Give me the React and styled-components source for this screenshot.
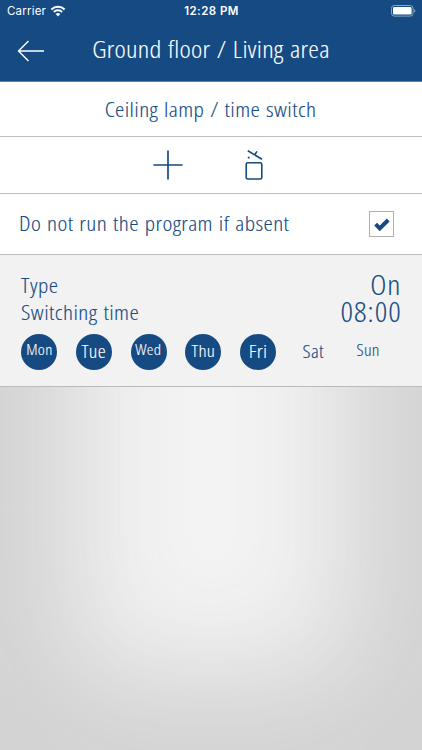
import React, { useState } from "react";
import styled, { createGlobalStyle } from "styled-components";

const DAYS = [
    { name: "Mon", size: 14.5, lift: 2.5, active: true },
    { name: "Tue", size: 17.5, lift: 1, active: true },
    { name: "Wed", size: 14.5, lift: 2.5, active: true },
    { name: "Thu", size: 16.5, lift: 2, active: true },
    { name: "Fri", size: 18.5, lift: 1.5, active: true },
    { name: "Sat", size: 17.5, lift: 1, active: false },
    { name: "Sun", size: 15.5, lift: 2, active: false },
];

const App = () => {
    const [skipAbsent, setSkipAbsent] = useState(true);
    const [days, setDays] = useState(DAYS);

    const toggleDay = (name) =>
        setDays(
            days.map((day) =>
                day.name === name ? { ...day, active: !day.active } : day
            )
        );

    return (
        <Screen>
            <GlobalStyle />
            <Header>
                <StatusBar>
                    <Carrier>
                        Carrier
                        <WifiIcon />
                    </Carrier>
                    <Clock>12:28 PM</Clock>
                    <BatteryIcon />
                </StatusBar>
                <NavBar>
                    <IconButton aria-label="Back">
                        <BackIcon />
                    </IconButton>
                    <Title>Ground floor / Living area</Title>
                </NavBar>
            </Header>
            <TitleRow>
                <Subtitle>Ceiling lamp / time switch</Subtitle>
            </TitleRow>
            <Toolbar>
                <IconButton aria-label="Add">
                    <PlusIcon />
                </IconButton>
                <IconButton aria-label="Delete">
                    <TrashIcon />
                </IconButton>
            </Toolbar>
            <OptionRow>
                <OptionLabel>Do not run the program if absent</OptionLabel>
                <Checkbox
                    role="checkbox"
                    aria-label="Absent"
                    aria-checked={skipAbsent}
                    onClick={() => setSkipAbsent(!skipAbsent)}
                >
                    {skipAbsent && <CheckIcon />}
                </Checkbox>
            </OptionRow>
            <Program>
                <Detail>
                    <DetailLabel>Type</DetailLabel>
                    <DetailValue>On</DetailValue>
                </Detail>
                <Detail>
                    <DetailLabel>Switching time</DetailLabel>
                    <DetailValue>08:00</DetailValue>
                </Detail>
                <Days>
                    {days.map((day) => (
                        <Day
                            key={day.name}
                            $active={day.active}
                            onClick={() => toggleDay(day.name)}
                        >
                            <DayName $size={day.size} $lift={day.lift}>
                                {day.name}
                            </DayName>
                        </Day>
                    ))}
                </Days>
            </Program>
        </Screen>
    );
};

const WifiIcon = () => (
    <svg width="16" height="12" viewBox="0 0 15 12" fill="none" stroke="#fff">
        <path d="M0.9 4.4a9.4 9.4 0 0 1 13.2 0" strokeWidth="2.1" />
        <path d="M3.4 7a5.8 5.8 0 0 1 8.2 0" strokeWidth="2" />
        <path d="M7.5 11.4L5.2 9a3.3 3.3 0 0 1 4.6 0z" fill="#fff" stroke="none" />
    </svg>
);

const BatteryIcon = () => (
    <svg width="25" height="12" viewBox="0 0 25 12" fill="none">
        <rect x="0.5" y="0.5" width="21.6" height="10.6" rx="2.8" stroke="#8ba5c2" />
        <rect x="2" y="2" width="18.6" height="7.6" rx="1.4" fill="#fff" />
        <path d="M23.2 4v3.8c1.5-.6 1.5-3.2 0-3.8z" fill="#8ba5c2" />
    </svg>
);

const BackIcon = () => (
    <svg width="28" height="22" viewBox="0 0 28 22" fill="none" stroke="#fff" strokeWidth="1.4">
        <path d="M11.5 1L1.5 11l10 10M1.5 11H27" />
    </svg>
);

const PlusIcon = () => (
    <svg width="30" height="30" viewBox="0 0 30 30" stroke="#164a82" strokeWidth="1.7">
        <path d="M15 0.4v29.2M0.4 15h29.2" />
    </svg>
);

const TrashIcon = () => (
    <svg width="18" height="30" viewBox="0 0 18 30" fill="none" stroke="#164a82" strokeWidth="1.6">
        <rect x="1.2" y="12.8" width="15.6" height="16.2" rx="1.6" />
        <path d="M2.8 0.8L17 9.2M9.4 5.2L12 1.4" />
        <path d="M2.8 7.6h1.8" strokeWidth="1.8" />
    </svg>
);

const CheckIcon = () => (
    <svg width="16" height="13" viewBox="0 0 16 13" fill="none" stroke="#164a82" strokeWidth="4">
        <path d="M1.6 6.2l4.2 4.2L14.2 2" />
    </svg>
);

const GlobalStyle = createGlobalStyle`
    * {
        margin: 0;
        padding: 0;
        box-sizing: border-box;
    }
    body {
        font-family: "Open Sans", "Noto Sans", sans-serif;
        font-weight: 300;
        font-stretch: 75%;
        color: #164a82;
    }
    button {
        font: inherit;
        font-stretch: inherit;
        color: inherit;
        background: none;
        border: none;
        cursor: pointer;
    }
    svg {
        display: block;
    }
`;

const Screen = styled.div`
    height: 750px;
    background: #f3f3f3;
    box-shadow: inset 0 0 114px 76px #d2d2d2;
    overflow: hidden;
`;

const Header = styled.header`
    height: 82px;
    background: #164a82;
    color: #fff;
    border-bottom: 1px solid #5c80a8;
`;

const StatusBar = styled.div`
    display: grid;
    grid-template-columns: 1fr auto 1fr;
    align-items: center;
    height: 22px;
    padding: 0 6px 0 7px;
    font-family: Inter, sans-serif;
    font-stretch: normal;
    font-size: 11.5px;
    svg:last-child {
        justify-self: end;
    }
`;

const Carrier = styled.div`
    display: flex;
    align-items: center;
    gap: 4px;
    font-weight: 400;
    letter-spacing: 0.2px;
`;

const Clock = styled.div`
    font-weight: 600;
    letter-spacing: 0.45px;
`;

const NavBar = styled.div`
    display: grid;
    grid-template-columns: 28px 1fr 28px;
    align-items: center;
    height: 58px;
    padding: 0 17px;
`;

const IconButton = styled.button`
    display: flex;
`;

/* the condensed face is a little too narrow, so labels are widened */
const Label = styled.span`
    display: block;
    font-size: 21px;
    letter-spacing: 0.35px;
    word-spacing: 1px;
    white-space: nowrap;
    transform: scaleX(1.12);
    -webkit-text-stroke: 0.1px currentColor;
`;

const Title = styled(Label)`
    padding-bottom: 6px;
    font-size: 24px;
    letter-spacing: 0.25px;
    text-align: center;
`;

const Subtitle = styled(Label)`
    padding-bottom: 1px;
`;

const Row = styled.div`
    display: flex;
    align-items: center;
    background: #fff;
    border-bottom: 1px solid #bdbdbd;
`;

const TitleRow = styled(Row)`
    justify-content: center;
    height: 55px;
`;

const Toolbar = styled(Row)`
    justify-content: center;
    gap: 62px;
    height: 57px;
    padding-right: 6px;
`;

const OptionRow = styled(Row)`
    justify-content: space-between;
    height: 61px;
    padding: 0 28px 0 19px;
`;

const OptionLabel = styled(Label)`
    padding-bottom: 3px;
    letter-spacing: 0.35px;
    transform-origin: left;
`;

const Checkbox = styled.button`
    display: flex;
    align-items: center;
    justify-content: center;
    width: 25px;
    height: 26px;
    border: 1px solid #b0b0b0;
`;

const Program = styled.section`
    height: 132px;
    padding: 17px 21px 0;
    background: #f2f2f2;
    border-bottom: 1px solid #bbb;
`;

const Detail = styled.div`
    display: flex;
    justify-content: space-between;
    height: 27px;
    line-height: 27px;
`;

const DetailLabel = styled(Label)`
    letter-spacing: 0.4px;
    transform-origin: left;
`;

const DetailValue = styled(Label)`
    margin-right: -1px;
    font-size: 27px;
    letter-spacing: 0.9px;
    transform: scaleX(1.14);
    transform-origin: right;
    line-height: 25px;
`;

const Days = styled.div`
    display: flex;
    gap: 18.8px;
    padding-top: 8px;
`;

const Day = styled.button`
    display: flex;
    align-items: center;
    justify-content: center;
    flex: none;
    width: 36px;
    height: 36px;
    border-radius: 50%;
    background: ${({ $active }) => ($active ? "#164a82" : "transparent")};
    color: ${({ $active }) => ($active ? "#fff" : "#164a82")};
`;

const DayName = styled(Label)`
    padding-bottom: ${({ $lift }) => 2 * $lift}px;
    font-size: ${({ $size }) => $size}px;
    letter-spacing: 0.25px;
    transform: scaleX(1.15);
`;

export default App;
